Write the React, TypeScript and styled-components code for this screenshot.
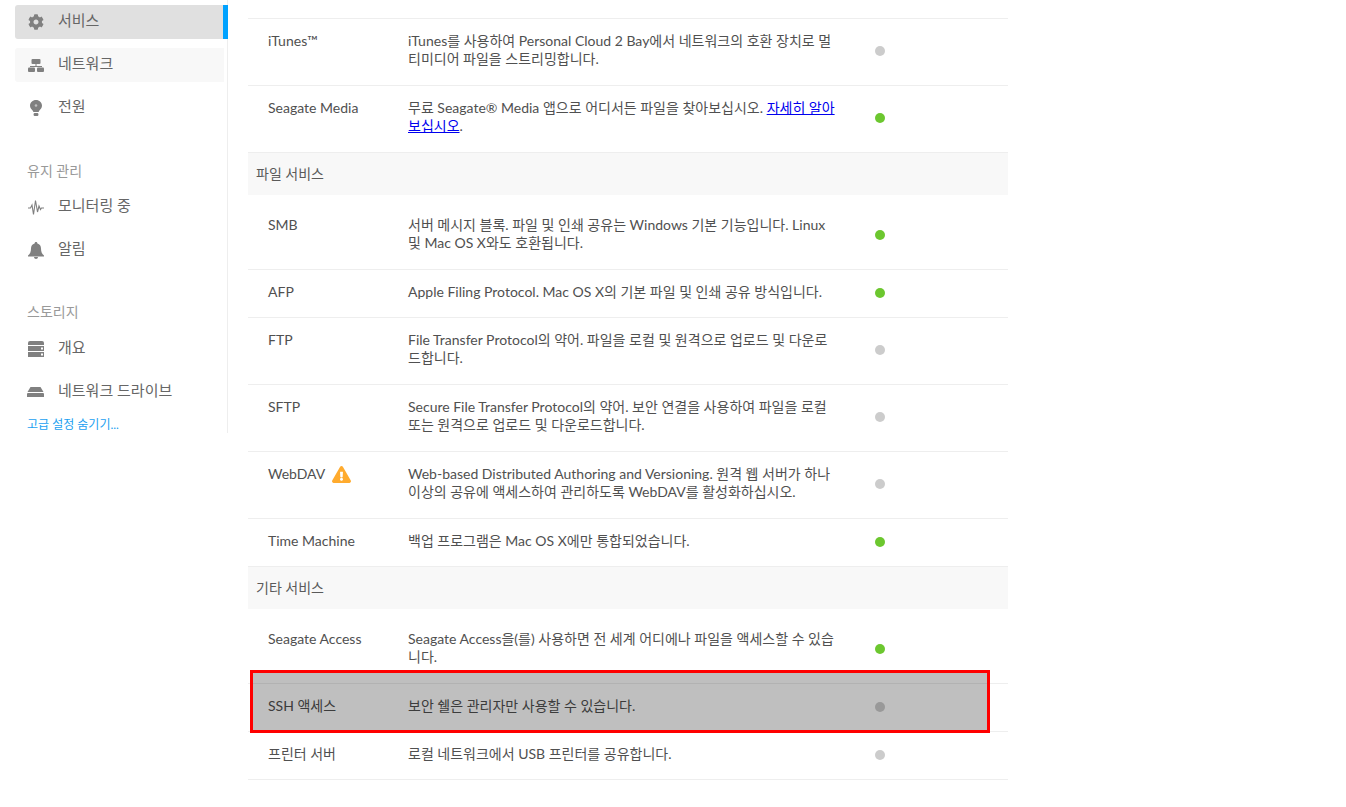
import React from 'react';
import styled, { createGlobalStyle } from 'styled-components';
import { FaCog, FaExclamationTriangle } from 'react-icons/fa';

const GlobalStyle = createGlobalStyle`
  html, body {
    margin: 0;
    padding: 0;
    background: #fff;
    overflow: hidden;
    font-family: Lato, 'Noto Sans CJK KR', sans-serif;
    font-size: 14px;
    color: #505050;
  }
`;

const Page = styled.div`
  position: relative;
  display: flex;
  align-items: flex-start;
  width: 1346px;
  height: 807px;
`;

const Sidebar = styled.aside`
  box-sizing: border-box;
  width: 213px;
  height: 433px;
  margin-left: 15px;
  padding-top: 5px;
  border-right: 1px solid #eee;
`;

const NavItem = styled.div<{ $active?: boolean; $hover?: boolean }>`
  box-sizing: border-box;
  display: flex;
  align-items: center;
  height: 34px;
  margin-bottom: 9px;
  padding-left: 12px;
  padding-bottom: 6px;
  border-radius: 3px 0 0 3px;
  font-size: 15px;
  color: #666;
  background: ${p => (p.$active ? '#e0e0e0' : p.$hover ? '#f8f8f8' : 'transparent')};
  border-right: ${p => (p.$active ? '5px solid #00a2ff' : 'none')};
  width: ${p => (p.$active ? '213px' : '209px')};
`;

const IconSlot = styled.span`
  display: flex;
  justify-content: center;
  align-items: center;
  width: 17px;
  margin-right: 14px;
  padding-top: 6px;
  color: #808080;
  font-size: 16px;
`;

const GroupLabel = styled.div<{ $gap: number; $after: number }>`
  margin-top: ${p => p.$gap}px;
  margin-bottom: ${p => p.$after}px;
  padding-left: 12px;
  line-height: 18px;
  font-size: 14px;
  color: #999;
`;

const AdvancedLink = styled.a`
  display: block;
  margin-top: -1px;
  padding-left: 12px;
  line-height: 16px;
  font-size: 12px;
  color: #1ba1f1;
`;

const Main = styled.main`
  width: 760px;
  margin-top: 18px;
  margin-left: 20px;
  border-top: 1px solid #eee;
`;

const SectionHead = styled.div`
  box-sizing: border-box;
  height: 42px;
  padding-left: 8px;
  line-height: 42px;
  background: #f8f8f8;
  color: #5a5a5a;
`;

const Row = styled.div<{ $tall?: boolean; $first?: boolean }>`
  box-sizing: border-box;
  display: grid;
  grid-template-columns: 140px 427px 1fr;
  height: ${p => (p.$tall ? 67 : 48) + (p.$first ? 8 : 0)}px;
  padding-left: 20px;
  padding-top: ${p => (p.$first ? 21 : 13)}px;
  border-bottom: 1px solid #eee;
  line-height: 18px;
`;

const Name = styled.div`
  display: flex;
  align-items: flex-start;
  gap: 7px;
`;

const Warn = styled.span`
  display: flex;
  color: #ffab2e;
  font-size: 19px;
`;

const Desc = styled.div`
  a {
    color: #0000ee;
    text-decoration: underline;
  }
`;

const Dot = styled.span<{ $on?: boolean; $tall?: boolean }>`
  display: block;
  width: 10px;
  height: 10px;
  margin-left: 40px;
  margin-top: ${p => (p.$tall ? 14 : 5)}px;
  border-radius: 50%;
  background: ${p => (p.$on ? '#6cc72f' : '#ccc')};
`;

const Highlight = styled.div`
  position: absolute;
  box-sizing: border-box;
  left: 250px;
  top: 670px;
  width: 740px;
  height: 63px;
  border: 3px solid #f00;
  background: rgba(0, 0, 0, 0.25);
`;

const NetworkIcon = () => (
  <svg width="16" height="13" viewBox="0 0 16 13" fill="currentColor">
    <rect x="3.5" y="0" width="9" height="5" rx="1" />
    <rect x="7.5" y="5" width="1" height="2" />
    <rect x="2" y="7" width="12" height="1" />
    <rect x="0" y="8.5" width="7" height="4.5" rx="1" />
    <rect x="9" y="8.5" width="7" height="4.5" rx="1" />
  </svg>
);

const BulbIcon = () => (
  <svg width="12" height="16" viewBox="0 0 12 16" fill="currentColor">
    <path d="M6 0 C2.6 0 0 2.5 0 5.7 C0 8 1.5 9 2.6 10.6 C3 11.2 3.2 11.6 3.3 12 H8.7 C8.8 11.6 9 11.2 9.4 10.6 C10.5 9 12 8 12 5.7 C12 2.5 9.4 0 6 0 Z" />
    <rect x="3.6" y="13" width="4.8" height="3" rx="1" />
    <circle cx="6" cy="5.5" r="1.3" fill="#fff" fillOpacity="0.5" />
  </svg>
);

const PulseIcon = () => (
  <svg width="16" height="15" viewBox="0 0 16 15" fill="none" stroke="currentColor" strokeWidth="1.1">
    <path d="M0 8 H2.5 L4 5 L5.5 14.5 L7.5 0.5 L9.5 12 L11 6 L12.5 9.5 L13.5 8 H16" />
  </svg>
);

const BellIcon = () => (
  <svg width="16" height="17" viewBox="0 0 16 17" fill="currentColor">
    <path d="M8 0 C9 0 9.4 .7 9.4 1.4 C11.8 2 13 4 13 6.5 C13 10 14 12 16 13.5 V14.5 H0 V13.5 C2 12 3 10 3 6.5 C3 4 4.2 2 6.6 1.4 C6.6 .7 7 0 8 0 Z" />
    <path d="M6 15 H10 C10 16.2 9 17 8 17 C7 17 6 16.2 6 15 Z" />
  </svg>
);

const ServerIcon = () => (
  <svg width="16" height="16" viewBox="0 0 16 16" fill="currentColor">
    <path d="M2 0 H14 Q16 0 16 2 V4 H0 V2 Q0 0 2 0 Z" />
    <path d="M0 5 H16 V10 H0 Z" />
    <path d="M0 11 H16 V16 H0 Z" />
    <rect x="13" y="6.5" width="2" height="2" fill="#fff" />
    <rect x="13" y="12.5" width="2" height="2" fill="#fff" />
  </svg>
);

const DriveIcon = () => (
  <svg width="17" height="10" viewBox="0 0 17 10" fill="currentColor">
    <path d="M3.5 0 H13.5 L16.5 5 H0.5 Z" />
    <path d="M1 6 H16 Q17 6 17 7 V10 H0 V7 Q0 6 1 6 Z" />
  </svg>
);

type Service = { name: string; desc: React.ReactNode; on?: boolean; tall?: boolean; warn?: boolean };

const topRows: Service[] = [
  { name: 'iTunes™', desc: 'iTunes를 사용하여 Personal Cloud 2 Bay에서 네트워크의 호환 장치로 멀티미디어 파일을 스트리밍합니다.', tall: true },
  {
    name: 'Seagate Media',
    desc: (
      <>
        무료 Seagate® Media 앱으로 어디서든 파일을 찾아보십시오. <a href="#more">자세히 알아보십시오</a>.
      </>
    ),
    on: true,
    tall: true,
  },
];

const fileRows: Service[] = [
  { name: 'SMB', desc: '서버 메시지 블록. 파일 및 인쇄 공유는 Windows 기본 기능입니다. Linux 및 Mac OS X와도 호환됩니다.', on: true, tall: true },
  { name: 'AFP', desc: 'Apple Filing Protocol. Mac OS X의 기본 파일 및 인쇄 공유 방식입니다.', on: true },
  { name: 'FTP', desc: 'File Transfer Protocol의 약어. 파일을 로컬 및 원격으로 업로드 및 다운로드합니다.', tall: true },
  { name: 'SFTP', desc: 'Secure File Transfer Protocol의 약어. 보안 연결을 사용하여 파일을 로컬 또는 원격으로 업로드 및 다운로드합니다.', tall: true },
  { name: 'WebDAV', desc: 'Web-based Distributed Authoring and Versioning. 원격 웹 서버가 하나 이상의 공유에 액세스하여 관리하도록 WebDAV를 활성화하십시오.', tall: true, warn: true },
  { name: 'Time Machine', desc: '백업 프로그램은 Mac OS X에만 통합되었습니다.', on: true },
];

const otherRows: Service[] = [
  { name: 'Seagate Access', desc: 'Seagate Access을(를) 사용하면 전 세계 어디에나 파일을 액세스할 수 있습니다.', on: true, tall: true },
  { name: 'SSH 액세스', desc: '보안 쉘은 관리자만 사용할 수 있습니다.' },
  { name: '프린터 서버', desc: '로컬 네트워크에서 USB 프린터를 공유합니다.' },
];

const ServiceRows: React.FC<{ rows: Service[]; afterHead?: boolean }> = ({ rows, afterHead }) => (
  <>
    {rows.map((r, i) => (
      <Row key={r.name} $tall={r.tall} $first={afterHead && i === 0}>
        <Name>
          {r.name}
          {r.warn && (
            <Warn>
              <FaExclamationTriangle />
            </Warn>
          )}
        </Name>
        <Desc>{r.desc}</Desc>
        <div>
          <Dot $on={r.on} $tall={r.tall} />
        </div>
      </Row>
    ))}
  </>
);

const App: React.FC = () => (
  <Page lang="ko">
    <GlobalStyle />
    <Sidebar>
      <NavItem $active>
        <IconSlot><FaCog /></IconSlot>서비스
      </NavItem>
      <NavItem $hover>
        <IconSlot><NetworkIcon /></IconSlot>네트워크
      </NavItem>
      <NavItem>
        <IconSlot><BulbIcon /></IconSlot>전원
      </NavItem>
      <GroupLabel $gap={37} $after={10}>유지 관리</GroupLabel>
      <NavItem>
        <IconSlot><PulseIcon /></IconSlot>모니터링 중
      </NavItem>
      <NavItem>
        <IconSlot><BellIcon /></IconSlot>알림
      </NavItem>
      <GroupLabel $gap={36} $after={11}>스토리지</GroupLabel>
      <NavItem>
        <IconSlot><ServerIcon /></IconSlot>개요
      </NavItem>
      <NavItem>
        <IconSlot><DriveIcon /></IconSlot>네트워크 드라이브
      </NavItem>
      <AdvancedLink>고급 설정 숨기기...</AdvancedLink>
    </Sidebar>
    <Main>
      <ServiceRows rows={topRows} />
      <SectionHead>파일 서비스</SectionHead>
      <ServiceRows rows={fileRows} afterHead />
      <SectionHead>기타 서비스</SectionHead>
      <ServiceRows rows={otherRows} afterHead />
    </Main>
    <Highlight />
  </Page>
);

export default App;
